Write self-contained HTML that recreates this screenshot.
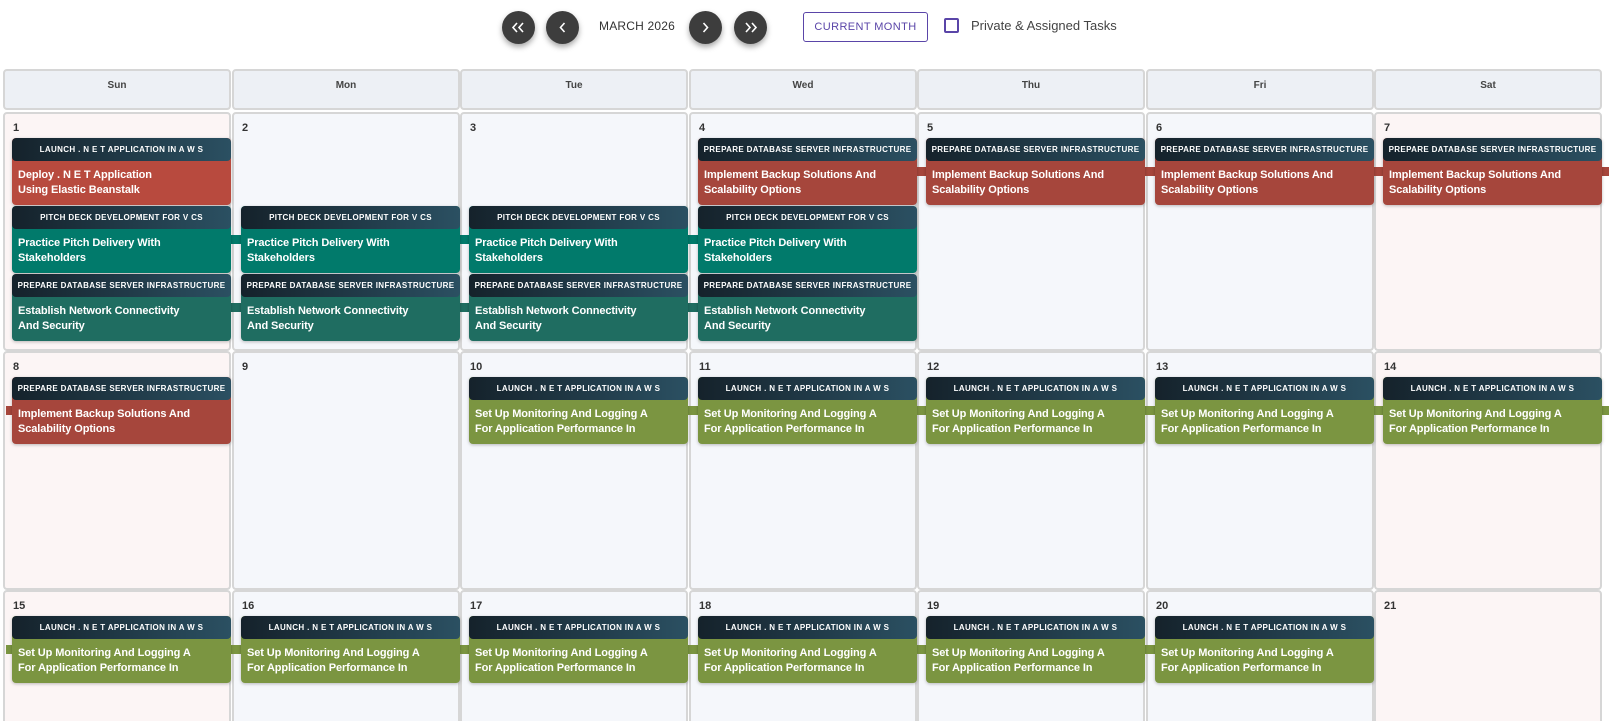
<!DOCTYPE html>
<html><head><meta charset="utf-8"><style>
*{box-sizing:border-box;margin:0;padding:0}
html,body{width:1622px;height:721px;overflow:hidden;background:#fff}
body{font-family:"Liberation Sans",Arial,sans-serif}
#w{position:relative;width:1622px;height:721px;overflow:hidden}
.nb{position:absolute;top:11px;width:33px;height:33px;border-radius:50%;background:#3d3d3d;box-shadow:0 3px 6px rgba(0,0,0,.35)}
.nb svg{position:absolute;left:0;top:0}
.mt{position:absolute;left:599px;top:19px;font-size:12px;color:#333;letter-spacing:.2px}
.cm{position:absolute;left:803px;top:12px;width:125px;height:30px;border:1px solid #5a45a8;border-radius:3px;color:#5a45a8;font-size:11px;text-align:center;line-height:28px;letter-spacing:.4px}
.cb{position:absolute;left:944px;top:18px;width:15px;height:15px;border:2px solid #5a45a8;border-radius:2px}
.cl{position:absolute;left:971px;top:18px;font-size:13px;color:#444}
.hd{position:absolute;top:69px;height:41px;width:228px;background:#edf0f5;border:2px solid #d6d6d6;border-radius:4px;font-size:10px;font-weight:bold;color:#444;text-align:center;line-height:30px}
.c{position:absolute;width:228px;height:239px;border:2px solid #d6d6d6;border-radius:4px;background:#f5f7fb}
.c.w{background:#fcf5f5}
.d{position:absolute;font-size:11px;font-weight:bold;color:#333}
.ev{position:absolute;width:219px;height:67px;border-radius:4px;background:var(--c);box-shadow:0 1px 3px rgba(0,0,0,.25);overflow:hidden;z-index:2}
.ev .h{height:23px;background:linear-gradient(90deg,#15222b,#2b5062);color:#fff;font-size:8px;font-weight:bold;letter-spacing:.35px;text-align:center;line-height:23px;border-radius:4px;white-space:nowrap}
.ev .b{color:#fff;font-size:11px;font-weight:bold;line-height:15px;padding:7px 6px 0;letter-spacing:-.1px}
.k{position:absolute;height:9px;width:14px;background:var(--c);z-index:1}
</style></head><body><div id="w">
<div class="nb" style="left:502px"><svg width="33" height="33"><path d="M15 12l-4 4.5 4 4.5M21 12l-4 4.5 4 4.5" stroke="#fff" stroke-width="1.6" fill="none"/></svg></div>
<div class="nb" style="left:546px"><svg width="33" height="33"><path d="M18.5 12l-4 4.5 4 4.5" stroke="#fff" stroke-width="1.6" fill="none"/></svg></div>
<div class="mt">MARCH 2026</div>
<div class="nb" style="left:689px"><svg width="33" height="33"><path d="M14.5 12l4 4.5-4 4.5" stroke="#fff" stroke-width="1.6" fill="none"/></svg></div>
<div class="nb" style="left:734px"><svg width="33" height="33"><path d="M12 12l4 4.5-4 4.5M18 12l4 4.5-4 4.5" stroke="#fff" stroke-width="1.6" fill="none"/></svg></div>
<div class="cm">CURRENT MONTH</div>
<div class="cb"></div>
<div class="cl">Private &amp; Assigned Tasks</div>

<div class="hd" style="left:3px">Sun</div>
<div class="hd" style="left:232px">Mon</div>
<div class="hd" style="left:460px">Tue</div>
<div class="hd" style="left:689px">Wed</div>
<div class="hd" style="left:917px">Thu</div>
<div class="hd" style="left:1146px">Fri</div>
<div class="hd" style="left:1374px">Sat</div>

<div class="c w" style="left:3px;top:112px"></div><div class="d" style="left:13px;top:122px">1</div>
<div class="c" style="left:232px;top:112px"></div><div class="d" style="left:242px;top:122px">2</div>
<div class="c" style="left:460px;top:112px"></div><div class="d" style="left:470px;top:122px">3</div>
<div class="c" style="left:689px;top:112px"></div><div class="d" style="left:699px;top:122px">4</div>
<div class="c" style="left:917px;top:112px"></div><div class="d" style="left:927px;top:122px">5</div>
<div class="c" style="left:1146px;top:112px"></div><div class="d" style="left:1156px;top:122px">6</div>
<div class="c w" style="left:1374px;top:112px"></div><div class="d" style="left:1384px;top:122px">7</div>
<div class="c w" style="left:3px;top:351px"></div><div class="d" style="left:13px;top:361px">8</div>
<div class="c" style="left:232px;top:351px"></div><div class="d" style="left:242px;top:361px">9</div>
<div class="c" style="left:460px;top:351px"></div><div class="d" style="left:470px;top:361px">10</div>
<div class="c" style="left:689px;top:351px"></div><div class="d" style="left:699px;top:361px">11</div>
<div class="c" style="left:917px;top:351px"></div><div class="d" style="left:927px;top:361px">12</div>
<div class="c" style="left:1146px;top:351px"></div><div class="d" style="left:1156px;top:361px">13</div>
<div class="c w" style="left:1374px;top:351px"></div><div class="d" style="left:1384px;top:361px">14</div>
<div class="c w" style="left:3px;top:590px"></div><div class="d" style="left:13px;top:600px">15</div>
<div class="c" style="left:232px;top:590px"></div><div class="d" style="left:242px;top:600px">16</div>
<div class="c" style="left:460px;top:590px"></div><div class="d" style="left:470px;top:600px">17</div>
<div class="c" style="left:689px;top:590px"></div><div class="d" style="left:699px;top:600px">18</div>
<div class="c" style="left:917px;top:590px"></div><div class="d" style="left:927px;top:600px">19</div>
<div class="c" style="left:1146px;top:590px"></div><div class="d" style="left:1156px;top:600px">20</div>
<div class="c w" style="left:1374px;top:590px"></div><div class="d" style="left:1384px;top:600px">21</div>

<div class="ev" style="left:12px;top:138px;--c:#b84a3e"><div class="h">LAUNCH . N E T APPLICATION IN A W S</div><div class="b">Deploy . N E T Application<br>Using Elastic Beanstalk</div></div>
<div class="ev" style="left:698px;top:138px;--c:#a6463c"><div class="h">PREPARE DATABASE SERVER INFRASTRUCTURE</div><div class="b">Implement Backup Solutions And<br>Scalability Options</div></div>
<div class="ev" style="left:926px;top:138px;--c:#a6463c"><div class="h">PREPARE DATABASE SERVER INFRASTRUCTURE</div><div class="b">Implement Backup Solutions And<br>Scalability Options</div></div>
<div class="ev" style="left:1155px;top:138px;--c:#a6463c"><div class="h">PREPARE DATABASE SERVER INFRASTRUCTURE</div><div class="b">Implement Backup Solutions And<br>Scalability Options</div></div>
<div class="ev" style="left:1383px;top:138px;--c:#a6463c"><div class="h">PREPARE DATABASE SERVER INFRASTRUCTURE</div><div class="b">Implement Backup Solutions And<br>Scalability Options</div></div>
<div class="k" style="left:915px;top:167px;--c:#a6463c"></div>
<div class="k" style="left:1144px;top:167px;--c:#a6463c"></div>
<div class="k" style="left:1372px;top:167px;--c:#a6463c"></div>
<div class="k" style="left:1600px;top:167px;width:9px;--c:#a6463c"></div>
<div class="ev" style="left:12px;top:206px;--c:#017a6b"><div class="h">PITCH DECK DEVELOPMENT FOR V CS</div><div class="b">Practice Pitch Delivery With<br>Stakeholders</div></div>
<div class="ev" style="left:241px;top:206px;--c:#017a6b"><div class="h">PITCH DECK DEVELOPMENT FOR V CS</div><div class="b">Practice Pitch Delivery With<br>Stakeholders</div></div>
<div class="ev" style="left:469px;top:206px;--c:#017a6b"><div class="h">PITCH DECK DEVELOPMENT FOR V CS</div><div class="b">Practice Pitch Delivery With<br>Stakeholders</div></div>
<div class="ev" style="left:698px;top:206px;--c:#017a6b"><div class="h">PITCH DECK DEVELOPMENT FOR V CS</div><div class="b">Practice Pitch Delivery With<br>Stakeholders</div></div>
<div class="k" style="left:229px;top:235px;--c:#017a6b"></div>
<div class="k" style="left:458px;top:235px;--c:#017a6b"></div>
<div class="k" style="left:686px;top:235px;--c:#017a6b"></div>
<div class="ev" style="left:12px;top:274px;--c:#1f6d61"><div class="h">PREPARE DATABASE SERVER INFRASTRUCTURE</div><div class="b">Establish Network Connectivity<br>And Security</div></div>
<div class="ev" style="left:241px;top:274px;--c:#1f6d61"><div class="h">PREPARE DATABASE SERVER INFRASTRUCTURE</div><div class="b">Establish Network Connectivity<br>And Security</div></div>
<div class="ev" style="left:469px;top:274px;--c:#1f6d61"><div class="h">PREPARE DATABASE SERVER INFRASTRUCTURE</div><div class="b">Establish Network Connectivity<br>And Security</div></div>
<div class="ev" style="left:698px;top:274px;--c:#1f6d61"><div class="h">PREPARE DATABASE SERVER INFRASTRUCTURE</div><div class="b">Establish Network Connectivity<br>And Security</div></div>
<div class="k" style="left:229px;top:303px;--c:#1f6d61"></div>
<div class="k" style="left:458px;top:303px;--c:#1f6d61"></div>
<div class="k" style="left:686px;top:303px;--c:#1f6d61"></div>

<div class="k" style="left:6px;top:406px;width:8px;--c:#a6463c"></div>
<div class="ev" style="left:12px;top:377px;--c:#a6463c"><div class="h">PREPARE DATABASE SERVER INFRASTRUCTURE</div><div class="b">Implement Backup Solutions And<br>Scalability Options</div></div>
<div class="ev" style="left:469px;top:377px;--c:#7b9541"><div class="h">LAUNCH . N E T APPLICATION IN A W S</div><div class="b">Set Up Monitoring And Logging A<br>For Application Performance In</div></div>
<div class="ev" style="left:698px;top:377px;--c:#7b9541"><div class="h">LAUNCH . N E T APPLICATION IN A W S</div><div class="b">Set Up Monitoring And Logging A<br>For Application Performance In</div></div>
<div class="ev" style="left:926px;top:377px;--c:#7b9541"><div class="h">LAUNCH . N E T APPLICATION IN A W S</div><div class="b">Set Up Monitoring And Logging A<br>For Application Performance In</div></div>
<div class="ev" style="left:1155px;top:377px;--c:#7b9541"><div class="h">LAUNCH . N E T APPLICATION IN A W S</div><div class="b">Set Up Monitoring And Logging A<br>For Application Performance In</div></div>
<div class="ev" style="left:1383px;top:377px;--c:#7b9541"><div class="h">LAUNCH . N E T APPLICATION IN A W S</div><div class="b">Set Up Monitoring And Logging A<br>For Application Performance In</div></div>
<div class="k" style="left:686px;top:406px;--c:#7b9541"></div>
<div class="k" style="left:915px;top:406px;--c:#7b9541"></div>
<div class="k" style="left:1144px;top:406px;--c:#7b9541"></div>
<div class="k" style="left:1372px;top:406px;--c:#7b9541"></div>
<div class="k" style="left:1600px;top:406px;width:9px;--c:#7b9541"></div>

<div class="k" style="left:6px;top:645px;width:8px;--c:#7b9541"></div>
<div class="ev" style="left:12px;top:616px;--c:#7b9541"><div class="h">LAUNCH . N E T APPLICATION IN A W S</div><div class="b">Set Up Monitoring And Logging A<br>For Application Performance In</div></div>
<div class="ev" style="left:241px;top:616px;--c:#7b9541"><div class="h">LAUNCH . N E T APPLICATION IN A W S</div><div class="b">Set Up Monitoring And Logging A<br>For Application Performance In</div></div>
<div class="ev" style="left:469px;top:616px;--c:#7b9541"><div class="h">LAUNCH . N E T APPLICATION IN A W S</div><div class="b">Set Up Monitoring And Logging A<br>For Application Performance In</div></div>
<div class="ev" style="left:698px;top:616px;--c:#7b9541"><div class="h">LAUNCH . N E T APPLICATION IN A W S</div><div class="b">Set Up Monitoring And Logging A<br>For Application Performance In</div></div>
<div class="ev" style="left:926px;top:616px;--c:#7b9541"><div class="h">LAUNCH . N E T APPLICATION IN A W S</div><div class="b">Set Up Monitoring And Logging A<br>For Application Performance In</div></div>
<div class="ev" style="left:1155px;top:616px;--c:#7b9541"><div class="h">LAUNCH . N E T APPLICATION IN A W S</div><div class="b">Set Up Monitoring And Logging A<br>For Application Performance In</div></div>
<div class="k" style="left:229px;top:645px;--c:#7b9541"></div>
<div class="k" style="left:458px;top:645px;--c:#7b9541"></div>
<div class="k" style="left:686px;top:645px;--c:#7b9541"></div>
<div class="k" style="left:915px;top:645px;--c:#7b9541"></div>
<div class="k" style="left:1144px;top:645px;--c:#7b9541"></div>
</div></body></html>
